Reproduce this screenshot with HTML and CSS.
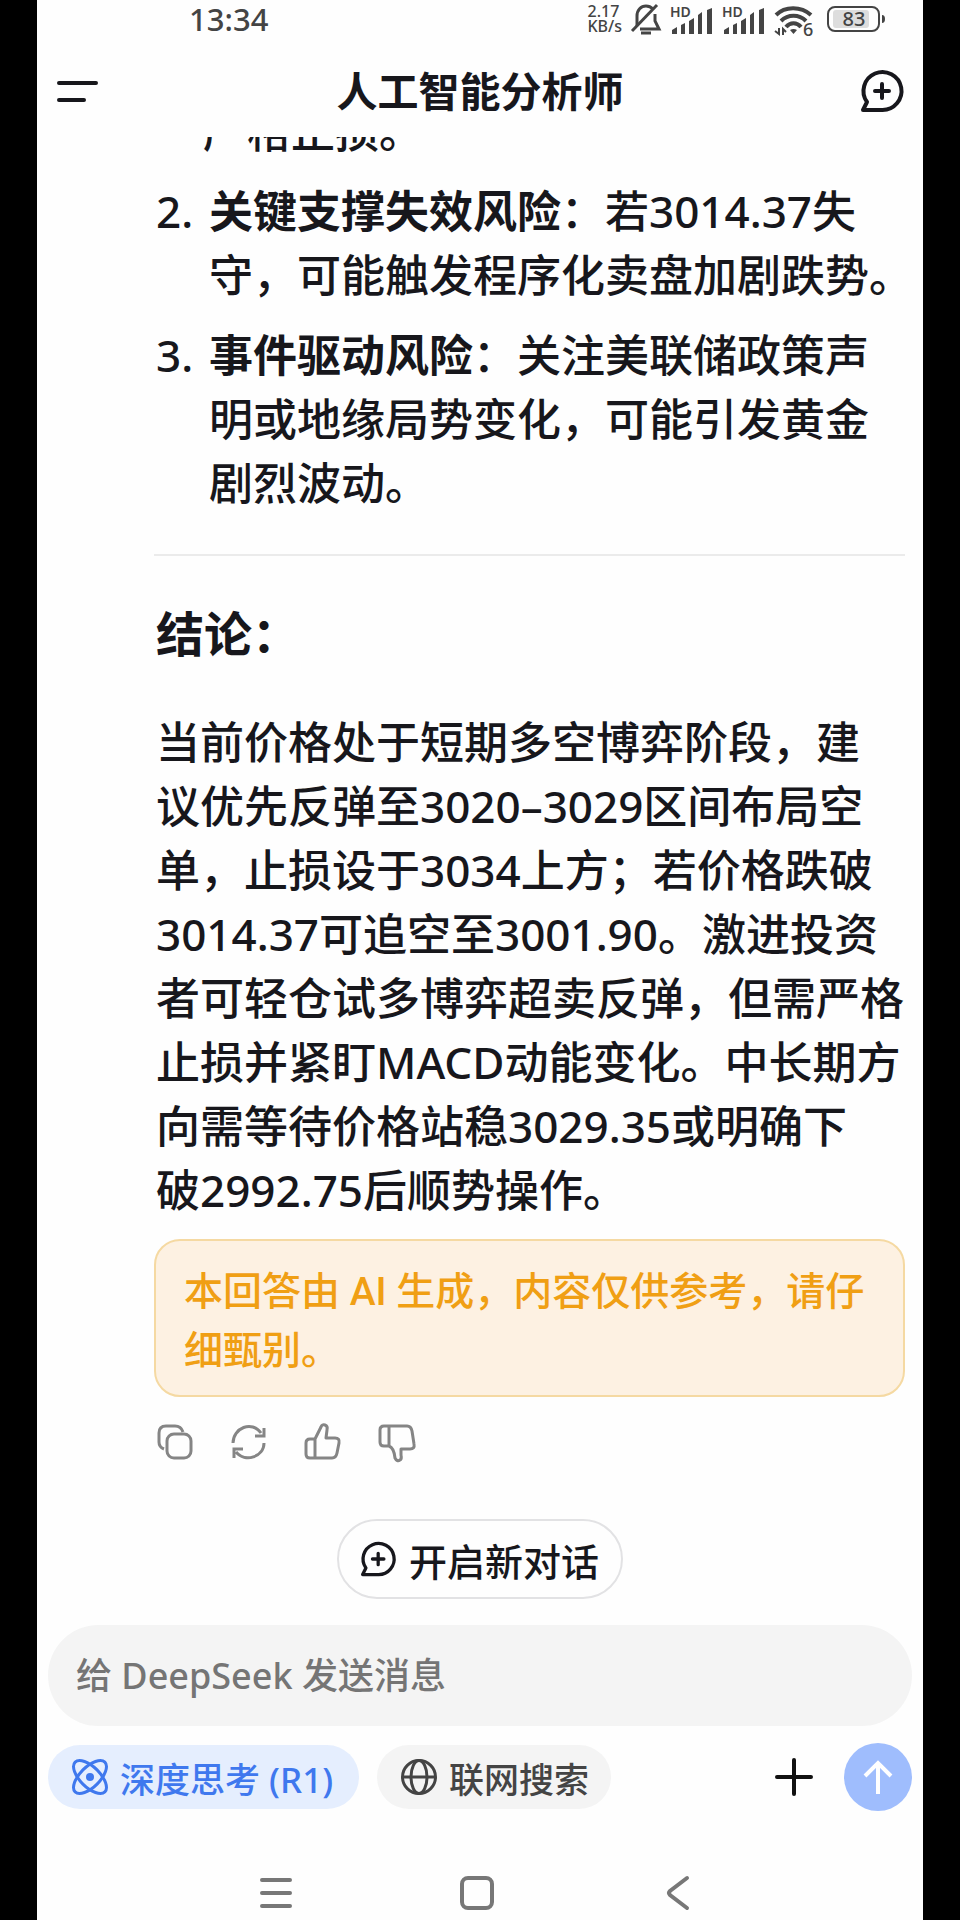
FILE: index.html
```html
<!DOCTYPE html>
<html lang="zh-CN">
<head>
    <meta charset="UTF-8">
    <meta name="viewport" content="width=device-width, initial-scale=1.0">
    <title>人工智能分析师</title>
    <link rel="stylesheet" href="styles.css">
</head>
<body>
    <div class="app">
        <div class="status-bar">
            <span class="time">13:34</span>
            <div class="status-icons">
                <span class="speed">2.17<br>KB/s</span>
                <svg class="bell" width="30" height="34" viewBox="0 0 30 34" fill="none" stroke="#444" stroke-width="3">
                    <path d="M6 24V14C6 8 10 4 15 4c3 0 5 1 7 3M24 12v7l4 8H9"/>
                    <path d="M26 3L1 29"/>
                    <path d="M10 31h10" stroke-width="3"/>
                </svg>
                <svg class="signal" width="43" height="34" viewBox="0 0 43 34">
                    <text x="0" y="15" class="hd">HD</text>
                    <g fill="#444"><path d="M2 32v-4l5-3v7zM11 32V23l4-2v11zM19 32V19l5-3v16zM28 32V13l4-3v22zM37 32V8l5-2v26z"/></g>
                </svg>
                <svg class="signal" width="43" height="34" viewBox="0 0 43 34">
                    <text x="0" y="15" class="hd">HD</text>
                    <g fill="#444"><path d="M2 32v-4l5-3v7zM11 32V23l4-2v11zM19 32V19l5-3v16zM28 32V13l4-3v22zM37 32V8l5-2v26z"/></g>
                </svg>
                <svg class="wifi" width="40" height="34" viewBox="0 0 40 34" fill="none" stroke="#444" stroke-width="4">
                    <path d="M2 13C11 4 27 4 37 13M7 19c7-7 18-7 25 0M12 25c4-5 11-5 15 0"/>
                    <path d="M16 28q3.500-2 7 0l-3.500 4z" fill="#444" stroke="none"/>
                    <path d="M5 26v6l-4-3M9 33v-6l3 3" stroke-width="2"/>
                    <text x="29" y="34" class="wifi-num">6</text>
                </svg>
                <svg class="battery" width="59" height="28" viewBox="0 0 59 28">
                    <rect x="6" y="5" width="36" height="18" rx="3" fill="#ddd"/>
                    <rect x="1" y="2" width="51" height="24" rx="7" fill="none" stroke="#444" stroke-width="2"/>
                    <path d="M55 10q3 0 3 4t-3 4z" fill="#444"/>
                    <text x="27" y="21" class="battery-num">83</text>
                </svg>
            </div>
        </div>

        <header class="header">
            <button class="icon-button" aria-label="菜单">
                <svg width="44" height="44" viewBox="0 0 44 44" fill="none" stroke="#17171c" stroke-width="4" stroke-linecap="round">
                    <path d="M4 14h37M4 31h25"/>
                </svg>
            </button>
            <h1 class="title">人工智能分析师</h1>
            <button class="icon-button" aria-label="新对话">
                <svg width="44" height="44" viewBox="0 0 44 44" fill="none" stroke="#17171c" stroke-width="4" stroke-linejoin="round" stroke-linecap="round">
                    <path d="M2 41l4-8A19 19 0 1 1 21 41z"/>
                    <path d="M21 15v14M14 22h14"/>
                </svg>
            </button>
        </header>

        <main class="chat">
            <div class="message">
                <p class="risk-tail">严格止损。</p>
                <ol class="risks" start="2">
                    <li><span class="num">2.</span><p><strong>关键支撑失效风险</strong>：若3014.37失<br>守，可能触发程序化卖盘加剧跌势。</p></li>
                    <li><span class="num">3.</span><p><strong>事件驱动风险</strong>：关注美联储政策声<br>明或地缘局势变化，可能引发黄金<br>剧烈波动。</p></li>
                </ol>
                <hr class="divider">
                <h2 class="subtitle">结论：</h2>
                <p class="summary">当前价格处于短期多空博弈阶段，建<br>议优先反弹至3020–3029区间布局空<br>单，止损设于3034上方；若价格跌破<br>3014.37可追空至3001.90。激进投资<br>者可轻仓试多博弈超卖反弹，但需严格<br>止损并紧盯MACD动能变化。中长期方<br>向需等待价格站稳3029.35或明确下<br>破2992.75后顺势操作。</p>
                <p class="notice">本回答由 AI 生成，内容仅供参考，请仔<br>细甄别。</p>
                <div class="actions">
                    <button class="icon-button" aria-label="复制">
                        <svg width="38" height="38" viewBox="0 0 38 38" fill="none" stroke="#858585" stroke-width="3">
                            <rect x="11" y="11" width="24" height="24" rx="7"/>
                            <path d="M8 26q-5-2-5-7V10q0-7 7-7h9q6 0 8 6"/>
                        </svg>
                    </button>
                    <button class="icon-button" aria-label="重新生成">
                        <svg width="38" height="38" viewBox="0 0 38 38" fill="none" stroke="#858585" stroke-width="3">
                            <path d="M3 20C3 5 22-3 31 10M34 5v8h-9M34 20C34 34 15 40 6 29M4 35v-9h9"/>
                        </svg>
                    </button>
                    <button class="icon-button" aria-label="喜欢">
                        <svg width="38" height="38" viewBox="0 0 38 38" fill="none" stroke="#858585" stroke-width="3" stroke-linejoin="round">
                            <path d="M11 16l6-12q1-3 4-2 3 1 2 5l-1 8h9q5 0 4 5l-2 10q-1 5-5 5H6q-4 0-4-4V20q0-4 4-4h5M11 16v19"/>
                        </svg>
                    </button>
                    <button class="icon-button" aria-label="不喜欢">
                        <svg width="38" height="38" viewBox="0 0 38 38" fill="none" stroke="#858585" stroke-width="3" stroke-linejoin="round">
                            <path d="M11 23q5 2 6 12 2 4 5 2 2-1 1-5v-6h9q5 0 4-5L34 8q-1-5-5-5H6Q2 3 2 7v12q0 4 4 4h5V3"/>
                        </svg>
                    </button>
                </div>
            </div>
        </main>

        <button class="new-chat">
            <svg width="36" height="36" viewBox="0 0 44 44" fill="none" stroke="#17171c" stroke-width="4" stroke-linejoin="round" stroke-linecap="round">
                <path d="M2 41l4-8A19 19 0 1 1 21 41z"/>
                <path d="M21 15v14M14 22h14"/>
            </svg>
            开启新对话
        </button>

        <form class="composer">
            <input class="message-input" type="text" placeholder="给 DeepSeek 发送消息" aria-label="给 DeepSeek 发送消息">
            <div class="tools">
                <button class="chip chip-active" type="button">
                    <svg width="36" height="36" viewBox="0 0 36 36" fill="none" stroke="#3f78ee" stroke-width="3">
                        <ellipse cx="18" cy="18" rx="21" ry="10" transform="rotate(45 18 18)"/>
                        <ellipse cx="18" cy="18" rx="21" ry="10" transform="rotate(-45 18 18)"/>
                        <circle cx="18" cy="18" r="4" fill="#3f78ee" stroke="none"/>
                    </svg>
                    深度思考 (R1)
                </button>
                <button class="chip" type="button">
                    <svg width="36" height="36" viewBox="0 0 36 36" fill="none" stroke="#444" stroke-width="3">
                        <circle cx="18" cy="18" r="16.500"/>
                        <ellipse cx="18" cy="18" rx="8" ry="16.500"/>
                        <path d="M2 18h32"/>
                    </svg>
                    联网搜索
                </button>
                <button class="icon-button add" type="button" aria-label="添加">
                    <svg width="40" height="40" viewBox="0 0 40 40" fill="none" stroke="#111" stroke-width="4" stroke-linecap="round">
                        <path d="M20 3v34M3 20h34"/>
                    </svg>
                </button>
                <button class="send" type="submit" aria-label="发送">
                    <svg width="36" height="36" viewBox="0 0 36 36" fill="none" stroke="#fff" stroke-width="4">
                        <path d="M18 35V4M5 17L18 4l13 13"/>
                    </svg>
                </button>
            </div>
        </form>

        <nav class="nav-bar">
            <button class="icon-button" aria-label="最近任务">
                <svg width="36" height="36" viewBox="0 0 36 36" fill="none" stroke="#777" stroke-width="4" stroke-linecap="round">
                    <path d="M4 5h28M4 18h28M4 31h28"/>
                </svg>
            </button>
            <button class="icon-button" aria-label="主屏幕">
                <svg width="36" height="36" viewBox="0 0 36 36" fill="none" stroke="#777" stroke-width="4">
                    <rect x="3" y="3" width="30" height="30" rx="6"/>
                </svg>
            </button>
            <button class="icon-button" aria-label="返回">
                <svg width="36" height="36" viewBox="0 0 36 36" fill="none" stroke="#777" stroke-width="4" stroke-linecap="round">
                    <path d="M27 3L10 16q-2 2 0 4l17 13"/>
                </svg>
            </button>
        </nav>
    </div>
</body>
</html>
```
FILE: styles.css
```css
* {
    box-sizing: border-box;
}
body {
    margin: 0;
    padding: 0 37px;
    background-color: #000;
    font-family: "Noto Sans", "Noto Sans CJK SC", sans-serif;
    font-weight: 500;
    color: #17171c;
}
h1, h2, p, ol {
    margin: 0;
    padding: 0;
}
button {
    font: inherit;
    color: inherit;
    border: none;
    background: none;
    padding: 0;
}
svg {
    display: block;
    flex: none;
    overflow: visible;
}
.icon-button {
    display: flex;
}
.app {
    display: flex;
    flex-direction: column;
    height: 100vh;
    background-color: #fefefe;
}

/* Status bar */
.status-bar {
    display: flex;
    justify-content: space-between;
    align-items: center;
    height: 38px;
    padding: 0 37px 0 152px;
    color: #444;
}
.time {
    font-size: 31px;
}
.status-icons {
    display: flex;
    align-items: center;
    gap: 9px;
}
.speed {
    font-size: 16px;
    line-height: 15px;
}
.battery {
    margin-left: 4px;
}
.hd {
    font-size: 14px;
    font-weight: 600;
    fill: #444;
}
.wifi-num {
    font-size: 18px;
    fill: #444;
    stroke: none;
}
.battery-num {
    font-size: 20px;
    text-anchor: middle;
    fill: #444;
}

/* Header */
.header {
    display: flex;
    justify-content: space-between;
    align-items: center;
    height: 99px;
    padding: 6px 18px 0;
}
.title {
    font-size: 41px;
    line-height: 60px;
    font-weight: 700;
}

/* Messages, scrolled to the end */
.chat {
    flex: 1;
    min-height: 0;
    overflow: hidden;
    display: flex;
    flex-direction: column;
    justify-content: flex-end;
    padding: 0 18px 58px 117px;
}
.message {
    font-size: 44px;
    line-height: 64px;
    white-space: nowrap;
}
.risk-tail {
    margin-bottom: 16px;
    padding-left: 49px;
}
.risks {
    margin-bottom: 39px;
    padding-left: 2px;
    list-style: none;
}
.risks li {
    display: flex;
}
.risks li + li {
    margin-top: 16px;
}
.num {
    flex: none;
    width: 53px;
}
.divider {
    margin: 0;
    border: none;
    border-top: 2px solid #ebebeb;
}
.subtitle {
    margin: 46px 0 44px;
    padding-left: 2px;
    font-size: 48px;
    line-height: 64px;
    font-weight: 700;
}
.summary {
    padding-left: 2px;
}
.notice {
    margin: 17px 0 26px;
    padding: 22px 28px 14px;
    border: 2px solid #f5d9a2;
    border-radius: 26px;
    background-color: #fdf1e2;
    color: #f09f14;
    font-family: Roboto, "Noto Sans CJK SC", sans-serif;
    font-size: 39px;
    line-height: 59px;
}
.actions {
    display: flex;
    gap: 36px;
    padding-left: 2px;
}

.new-chat {
    align-self: center;
    display: flex;
    align-items: center;
    gap: 12px;
    height: 80px;
    padding: 0 22px;
    border: 2px solid #e2e2e4;
    border-radius: 40px;
    font-size: 38px;
}

/* Composer */
.composer {
    padding: 26px 11px 55px;
}
.message-input {
    display: block;
    width: 100%;
    height: 101px;
    padding: 0 28px;
    border: none;
    border-radius: 51px;
    background-color: #f4f4f4;
    font: inherit;
    font-size: 36px;
}
.message-input::placeholder {
    color: #757575;
}
.tools {
    display: flex;
    align-items: center;
    gap: 18px;
    margin-top: 17px;
}
.chip {
    display: flex;
    align-items: center;
    gap: 12px;
    height: 64px;
    padding: 0 22px 0 24px;
    border-radius: 32px;
    background-color: #f4f4f4;
    color: #444;
    font-size: 35px;
}
.chip-active {
    padding-right: 26px;
    background-color: #e5eefe;
    color: #3f78ee;
}
.add {
    margin-left: auto;
}
.send {
    display: flex;
    align-items: center;
    justify-content: center;
    width: 68px;
    height: 68px;
    margin-left: 12px;
    border-radius: 50%;
    background-color: #9fbdfd;
}

/* System navigation */
.nav-bar {
    display: flex;
    justify-content: center;
    align-items: center;
    gap: 165px;
    height: 54px;
    padding-right: 6px;
}
```
